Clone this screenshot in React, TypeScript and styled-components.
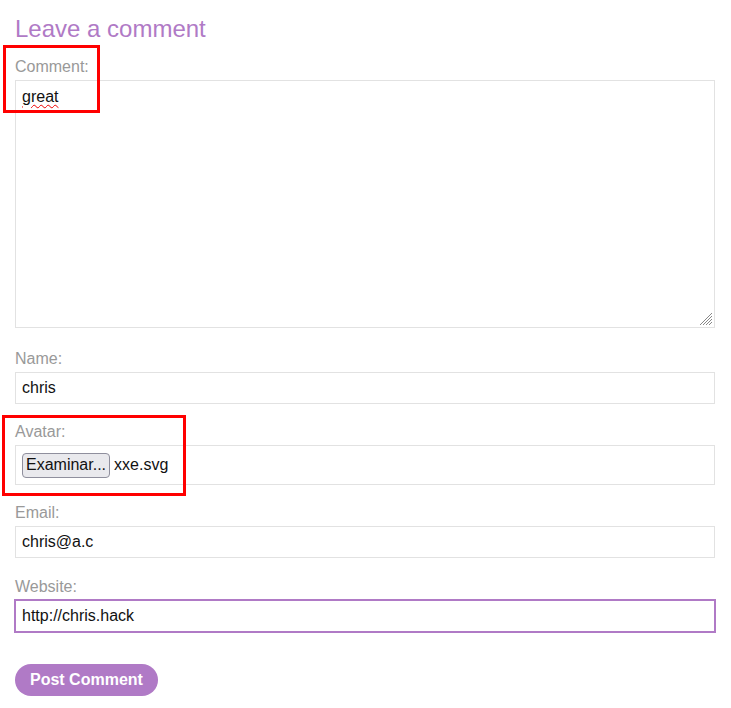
import React from "react";
import styled, { createGlobalStyle } from "styled-components";

const Global = createGlobalStyle`
  html, body { margin: 0; padding: 0; background: #fff; }
  body { font-family: "Liberation Sans", Arial, sans-serif; }
`;

const purple = "#b07ac6";

const Page = styled.div`
  position: relative;
  width: 731px;
  height: 708px;
  box-sizing: border-box;
  padding: 15px 0 0 15px;
`;

const Heading = styled.h1`
  margin: 0 0 15px;
  font-size: 24px;
  line-height: 28px;
  font-weight: normal;
  color: ${purple};
`;

const Form = styled.form`
  display: flex;
  flex-direction: column;
  width: 700px;
`;

const Label = styled.label`
  display: block;
  font-size: 16px;
  line-height: 18px;
  color: #999;
  margin-bottom: 4px;
`;

const Field = styled.div<{ $gap?: number }>`
  display: flex;
  flex-direction: column;
  margin-bottom: ${(p) => p.$gap ?? 20}px;
`;

const TextArea = styled.div`
  position: relative;
  box-sizing: border-box;
  height: 248px;
  border: 1px solid #e2e2e2;
  padding: 7px 6px;
  font-size: 16px;
  line-height: 18px;
  color: #111;
`;

const Misspelled = styled.span`
  text-decoration: underline wavy #e00;
  text-decoration-thickness: 1px;
  text-underline-offset: 2px;
`;

const Grip = styled.svg`
  position: absolute;
  right: 1px;
  bottom: 1px;
`;

const Input = styled.input<{ $focused?: boolean }>`
  box-sizing: border-box;
  width: 100%;
  height: 32px;
  margin: 0;
  padding: 0 6px;
  font-family: inherit;
  font-size: 16px;
  color: #111;
  background: #fff;
  border: 1px solid #e2e2e2;
  outline: ${(p) => (p.$focused ? `1px solid ${purple}` : "none")};
  border-color: ${(p) => (p.$focused ? purple : "#e2e2e2")};
`;

const FileBox = styled.div`
  box-sizing: border-box;
  height: 40px;
  border: 1px solid #e2e2e2;
  display: flex;
  align-items: center;
  gap: 4px;
  padding: 0 6px;
  font-size: 16px;
  color: #111;
`;

const FileButton = styled.button`
  box-sizing: border-box;
  height: 25px;
  padding: 0 3px;
  font-family: inherit;
  font-size: 16px;
  color: #111;
  background: #e9e9ed;
  border: 1px solid #8f8f9d;
  border-radius: 4px;
`;

const Submit = styled.button`
  align-self: flex-start;
  margin-top: 12px;
  height: 32px;
  padding: 0 15px;
  border: none;
  border-radius: 16px;
  background: ${purple};
  color: #fff;
  font-family: inherit;
  font-weight: bold;
  font-size: 16px;
`;

const Highlight = styled.div<{ $x: number; $y: number; $w: number; $h: number }>`
  position: absolute;
  left: ${(p) => p.$x}px;
  top: ${(p) => p.$y}px;
  width: ${(p) => p.$w}px;
  height: ${(p) => p.$h}px;
  box-sizing: border-box;
  border: 3px solid #ff0000;
  pointer-events: none;
`;

export default function App() {
  return (
    <>
      <Global />
      <Page>
        <Heading>Leave a comment</Heading>
        <Form onSubmit={(e) => e.preventDefault()}>
          <Field $gap={22}>
            <Label>Comment:</Label>
            <TextArea role="textbox">
              <Misspelled>great</Misspelled>
              <Grip width="14" height="14" viewBox="0 0 14 14">
                <g stroke="#888" strokeWidth="1">
                  <line x1="13" y1="1" x2="1" y2="13" />
                  <line x1="13" y1="4" x2="4" y2="13" />
                  <line x1="13" y1="7" x2="7" y2="13" />
                  <line x1="13" y1="10" x2="10" y2="13" />
                </g>
              </Grip>
            </TextArea>
          </Field>
          <Field $gap={19}>
            <Label>Name:</Label>
            <Input defaultValue="chris" readOnly />
          </Field>
          <Field $gap={19}>
            <Label>Avatar:</Label>
            <FileBox>
              <FileButton type="button">Examinar...</FileButton>
              <span>xxe.svg</span>
            </FileBox>
          </Field>
          <Field>
            <Label>Email:</Label>
            <Input defaultValue="chris@a.c" readOnly />
          </Field>
          <Field>
            <Label>Website:</Label>
            <Input defaultValue="http://chris.hack" readOnly $focused />
          </Field>
          <Submit type="submit">Post Comment</Submit>
        </Form>
        <Highlight $x={3} $y={45} $w={97} $h={68} />
        <Highlight $x={2} $y={415} $w={184} $h={81} />
      </Page>
    </>
  );
}
